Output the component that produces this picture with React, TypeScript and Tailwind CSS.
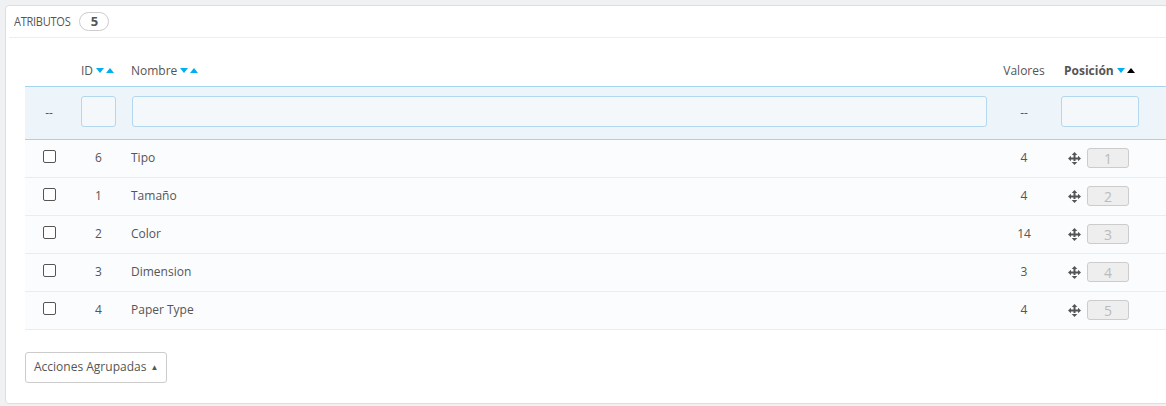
const rows = [
  { id: 6, name: 'Tipo', values: 4, pos: 1 },
  { id: 1, name: 'Tamaño', values: 4, pos: 2 },
  { id: 2, name: 'Color', values: 14, pos: 3 },
  { id: 3, name: 'Dimension', values: 3, pos: 4 },
  { id: 4, name: 'Paper Type', values: 4, pos: 5 },
]

function SortArrows({ active }: { active?: boolean }) {
  return (
    <span className="inline-flex items-center gap-[2px] ml-[3px] align-middle -translate-y-[1px]">
      <svg width="8" height="5" viewBox="0 0 8 5">
        <path d="M0 0h8L4 5z" fill="#00aff0" />
      </svg>
      <svg width="8" height="5" viewBox="0 0 8 5">
        <path d="M0 5h8L4 0z" fill={active ? '#000' : '#00aff0'} />
      </svg>
    </span>
  )
}

function MoveIcon() {
  return (
    <svg width="13" height="13" viewBox="0 0 13 13" className="shrink-0">
      <path d="M5.5 3h2v3.5H10v2H7.5V10h-2V8.5H3v-2h2.5z" fill="#555" transform="translate(0 -1)" />
      <path d="M6.5 0L9.3 3H3.7z" fill="#555" />
      <path d="M6.5 13L9.3 10H3.7z" fill="#555" />
      <path d="M0 6.5L3 3.7v5.6z" fill="#555" />
      <path d="M13 6.5L10 3.7v5.6z" fill="#555" />
    </svg>
  )
}

export default function App() {
  return (
    <div className="w-[1166px] h-[406px] overflow-hidden bg-[#eff1f2] pl-[5px] pt-[5px] font-['Open_Sans',sans-serif] text-[12px] text-[#555]">
      <div className="w-[1180px] h-[399px] bg-white border border-[#dcdfe2] rounded-[4px]">
        <div className="ml-[3px] h-[32px] border-b border-[#eeeeee] pl-[5px] flex items-center gap-[8px]">
          <span className="inline-block scale-x-85 origin-left -mr-[9px] text-[13px] text-[#555] tracking-tight">ATRIBUTOS</span>
          <span className="inline-flex items-center justify-center w-[30px] h-[19px] rounded-full border border-[#cccccc] text-[13px] font-bold text-[#555]">5</span>
        </div>
        <div className="pl-[19px] pt-[18px]">
          <table className="border-collapse w-[1160px] table-fixed">
            <colgroup>
              <col className="w-[48px]" />
              <col className="w-[51px]" />
              <col className="w-[871px]" />
              <col className="w-[58px]" />
              <col />
            </colgroup>
            <thead>
              <tr className="h-[30px]">
                <th />
                <th className="px-[8px] text-left font-normal">
                  ID<SortArrows />
                </th>
                <th className="px-[7px] text-left font-normal">
                  Nombre<SortArrows />
                </th>
                <th className="text-center font-normal">Valores</th>
                <th className="px-[11px] text-left font-bold">
                  Posición<SortArrows active />
                </th>
              </tr>
              <tr className="h-[53px] bg-[#eef5fa] border-y border-[#a3d3ee]">
                <td className="text-center">--</td>
                <td className="px-[8px]">
                  <div className="h-[31px] bg-[#f4f8fa] border border-[#b3d7ec] rounded-[3px] -translate-y-[1px]" />
                </td>
                <td className="pl-[8px] pr-[8px]">
                  <div className="h-[31px] bg-[#f4f8fa] border border-[#b3d7ec] rounded-[3px] -translate-y-[1px]" />
                </td>
                <td className="text-center">--</td>
                <td className="pl-[8px]">
                  <div className="w-[78px] h-[31px] bg-[#f4f8fa] border border-[#b3d7ec] rounded-[3px] -translate-y-[1px]" />
                </td>
              </tr>
            </thead>
            <tbody>
              {rows.map((r) => (
                <tr key={r.id} className="h-[38px] bg-[#fbfcfe] border-b border-[#eaedef]">
                  <td className="text-center">
                    <div className="mx-auto w-[13px] h-[13px] border border-[#555] rounded-[2px] bg-white -translate-y-[2px]" />
                  </td>
                  <td className="text-center">{r.id}</td>
                  <td className="px-[7px]">{r.name}</td>
                  <td className="text-center">{r.values}</td>
                  <td className="pl-[15px]">
                    <div className="flex items-center gap-[6px]">
                      <MoveIcon />
                      <span className="w-[42px] h-[20px] flex items-center justify-center bg-[#eeeeee] border border-[#cccccc] rounded-[3px] text-[14px] text-[#bbbbbb]">
                        {r.pos}
                      </span>
                    </div>
                  </td>
                </tr>
              ))}
            </tbody>
          </table>
          <div className="pt-[22px]">
            <button
              type="button"
              className="h-[31px] px-[8px] border border-[#cccccc] rounded-[3px] bg-white text-[12px] text-[#555] flex items-center gap-[4px]"
            >
              Acciones Agrupadas <span className="text-[8px]">▲</span>
            </button>
          </div>
        </div>
      </div>
    </div>
  )
}
